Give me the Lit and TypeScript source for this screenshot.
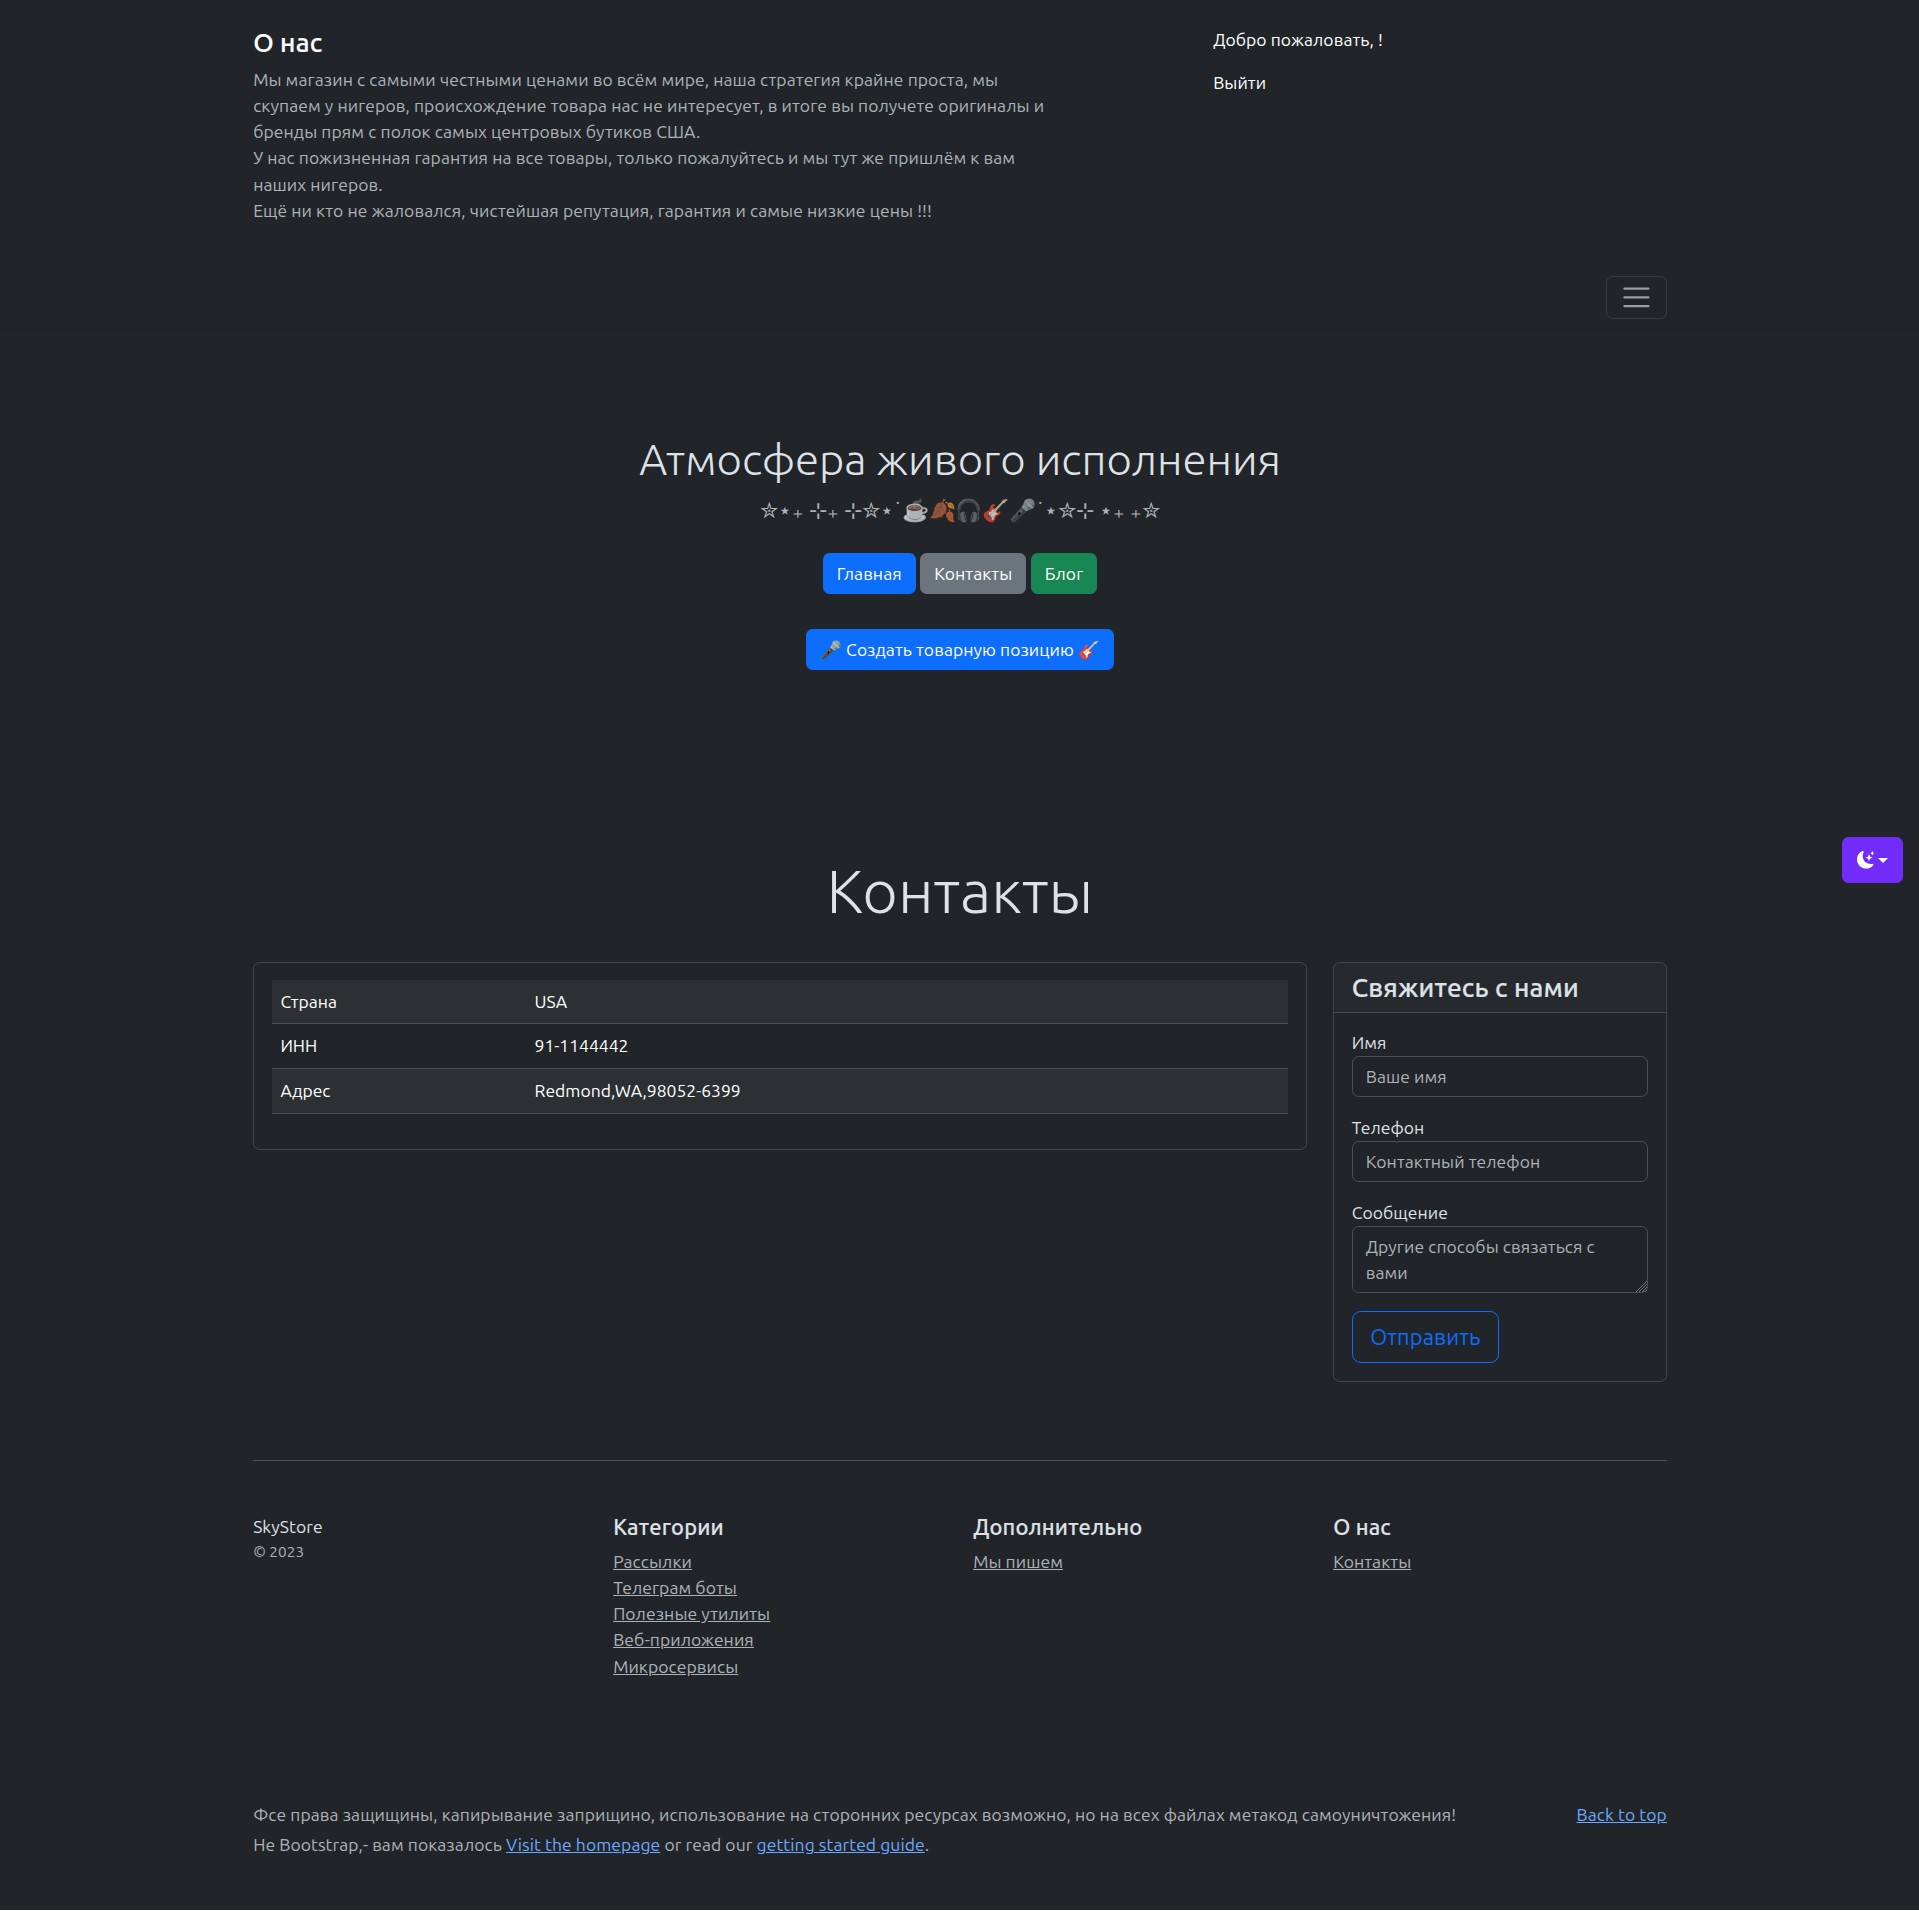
import { LitElement, html, css } from "lit";
import { customElement } from "lit/decorators.js";

interface FooterColumn {
  title: string;
  links: string[];
}

const requisites: [string, string][] = [
  ["Страна", "USA"],
  ["ИНН", "91-1144442"],
  ["Адрес", "Redmond,WA,98052-6399"],
];

const footerColumns: FooterColumn[] = [
  {
    title: "Категории",
    links: ["Рассылки", "Телеграм боты", "Полезные утилиты", "Веб-приложения", "Микросервисы"],
  },
  { title: "Дополнительно", links: ["Мы пишем"] },
  { title: "О нас", links: ["Контакты"] },
];

@customElement("app-root")
export class AppRoot extends LitElement {
  static styles = css`
    :host {
      --border: #495057;
      --muted: rgba(222, 226, 230, 0.75);
      --card-border: rgba(255, 255, 255, 0.15);
      display: block;
      height: 1910px;
      overflow: hidden;
      background: #212529;
      color: #dee2e6;
      font-family: "Ubuntu", "Noto Sans", "Liberation Sans", sans-serif;
      font-size: 17.5px;
      line-height: 1.5;
      letter-spacing: 0.075px;
    }
    *, *::before, *::after { box-sizing: border-box; }
    h1, h2, h4, h5, p, ul { margin: 0; padding: 0; }
    ul { list-style: none; }
    .container { width: 1440px; margin: 0 auto 0 240px; padding: 0 13.125px; }

    .about { display: flex; justify-content: space-between; padding: 26.75px 13.125px 25px; }
    .about-text { width: 813.75px; padding-bottom: 18px; color: var(--muted); letter-spacing: 0.085px; }
    .about-text h4 { position: relative; top: 0.5px; margin-bottom: 8.25px; color: #fff; }
    h4 {
      font-size: 26.25px;
      font-weight: 500;
      line-height: 1.2;
      letter-spacing: 0.17px;
      -webkit-text-stroke: 0.2px;
    }
    .account { width: 453.75px; color: #fff; }
    .account li { margin-bottom: 17px; }
    .navbar { padding: 8.75px 0; box-shadow: 0 2px 4px rgba(0, 0, 0, 0.075); }
    .navbar .container { display: flex; justify-content: flex-end; }
    .toggler {
      display: flex;
      align-items: center;
      height: 43px;
      padding: 0 13.125px;
      background: none;
      border: 1px solid rgba(255, 255, 255, 0.1);
      border-radius: 6.5625px;
    }
    .toggler svg { width: 32.8125px; height: 32.8125px; }

    .hero {
      display: flex;
      flex-direction: column;
      align-items: center;
      padding: 105px 0 105px 1px;
      text-align: center;
    }
    .hero h1 {
      margin-bottom: 8.75px;
      font-size: 43.75px;
      font-weight: 300;
      line-height: 1.2;
      letter-spacing: 0;
    }
    .lead {
      height: 32.8px;
      margin-bottom: 17.5px;
      color: var(--muted);
      font-family: "Ubuntu", sans-serif;
      font-size: 21.875px;
      font-weight: 300;
      line-height: 32px;
      letter-spacing: -0.07px;
      white-space: nowrap;
    }
    .actions { display: flex; gap: 4.2px; margin-bottom: 17.5px; padding: 8.75px 0; }
    .btn {
      padding: 7px 13.125px 6px;
      border: 1px solid transparent;
      border-radius: 6.5625px;
      color: #fff;
      font: inherit;
      line-height: 26px;
      letter-spacing: inherit;
      white-space: nowrap;
    }
    .primary { background: #0d6efd; }
    .secondary { background: #6c757d; }
    .success { background: #198754; }

    .contacts { padding-top: 52.5px; }
    .display {
      margin-bottom: 35px;
      padding-left: 1px;
      font-size: 61.25px;
      font-weight: 300;
      line-height: 1.2;
      letter-spacing: 0;
      text-align: center;
    }
    .cards { display: grid; grid-template-columns: 1053.75px 333.75px; gap: 26.25px; align-items: start; }
    .card { border: 1px solid var(--card-border); border-radius: 6.5625px; overflow: hidden; }
    .card-header {
      padding: 8.75px 17.5px;
      background: rgba(222, 226, 230, 0.03);
      border-bottom: 1px solid var(--card-border);
    }
    .card-body { padding: 16.5px 17.5px 18px; }
    .requisites { padding-bottom: 17px; color: #fff; letter-spacing: 0; }
    .row {
      display: grid;
      grid-template-columns: 1fr 3fr;
      border-bottom: 1px solid var(--border);
    }
    .row:nth-child(odd) { background: rgba(255, 255, 255, 0.05); }
    .row span { padding: 9.1px 8.75px 8.6px; line-height: 26px; }

    .field { display: flex; flex-direction: column; margin-bottom: 17.5px; line-height: 26.5px; }
    .field.first { margin-top: -0.4px; padding-top: 0.4px; }
    .field.last { margin-bottom: 18px; }
    .area { position: relative; }
    .area svg { position: absolute; right: 1px; bottom: 1px; width: 12px; height: 12px; }
    .control {
      display: block;
      width: 100%;
      margin: 0;
      padding: 6.5px 13.125px;
      background: #212529;
      border: 1px solid var(--border);
      border-radius: 6.5625px;
      color: #dee2e6;
      font: inherit;
      line-height: 26px;
      letter-spacing: inherit;
      outline: none;
    }
    input.control { height: 41px; }
    textarea.control { height: 66.5px; resize: none; overflow: hidden; }
    .control::placeholder { color: var(--muted); opacity: 1; }
    .submit {
      display: block;
      height: 52px;
      padding: 0 17.5px;
      background: none;
      border: 1px solid #0d6efd;
      border-radius: 8.75px;
      color: #0d6efd;
      font-family: inherit;
      font-size: 21.875px;
      letter-spacing: 0.13px;
    }

    .columns {
      display: grid;
      grid-template-columns: repeat(4, 1fr);
      column-gap: 26.25px;
      height: 289px;
      margin-top: 78.6px;
      padding-top: 52.5px;
      border-top: 1px solid var(--border);
    }
    .columns small { display: block; padding-top: 0.8px; color: var(--muted); font-size: 15.3125px; }
    h5 {
      margin-bottom: 8.75px;
      font-size: 21.875px;
      font-weight: 500;
      line-height: 1.2;
      letter-spacing: 0.18px;
      -webkit-text-stroke: 0.15px;
    }
    a { color: #6ea8fe; text-decoration: underline; }
    .columns a { color: var(--muted); }
    .legal {
      display: flex;
      justify-content: space-between;
      padding-top: 52.5px;
      color: var(--muted);
      letter-spacing: 0.07px;
    }
    .legal p { margin-bottom: 4.375px; }

    .theme {
      position: absolute;
      top: 837px;
      left: 1842px;
      display: flex;
      align-items: center;
      justify-content: center;
      width: 61px;
      height: 46px;
      padding: 0;
      background: #712cf9;
      border: 0;
      border-radius: 6.5625px;
      color: #fff;
    }
    .theme svg { width: 17.5px; height: 17.5px; }
    .caret {
      margin-left: 4px;
      border-top: 5.25px solid;
      border-right: 5.25px solid transparent;
      border-left: 5.25px solid transparent;
    }
  `;

  private renderHeader() {
    return html`
      <header>
        <div class="container about">
          <div class="about-text">
            <h4>О нас</h4>
            <p>
              Мы магазин с самыми честными ценами во всём мире, наша стратегия крайне проста, мы<br />
              скупаем у нигеров, происхождение товара нас не интересует, в итоге вы получете оригиналы и<br />
              бренды прям с полок самых центровых бутиков США.<br />
              У нас пожизненная гарантия на все товары, только пожалуйтесь и мы тут же пришлём к вам<br />
              наших нигеров.<br />
              Ещё ни кто не жаловался, чистейшая репутация, гарантия и самые низкие цены !!!
            </p>
          </div>
          <ul class="account">
            <li>Добро пожаловать, !</li>
            <li>Выйти</li>
          </ul>
        </div>
        <div class="navbar">
          <div class="container">
            <button class="toggler" aria-label="Меню">
              <svg viewBox="0 0 30 30" fill="none" stroke="#fff" stroke-opacity="0.55" stroke-width="2" stroke-linecap="round" stroke-miterlimit="10">
                <path d="M4 7h22M4 15h22M4 23h22" />
              </svg>
            </button>
          </div>
        </div>
      </header>
    `;
  }

  private renderContacts() {
    return html`
      <section class="contacts">
        <h1 class="display">Контакты</h1>
        <div class="container cards">
          <div class="card card-body">
            <div class="requisites">
              ${requisites.map(([name, value]) => html`<div class="row"><span>${name}</span><span>${value}</span></div>`)}
            </div>
          </div>
          <div class="card">
            <div class="card-header"><h4>Свяжитесь с нами</h4></div>
            <div class="card-body">
              <label class="field first">Имя<input class="control" placeholder="Ваше имя" /></label>
              <label class="field">Телефон<input class="control" placeholder="Контактный телефон" /></label>
              <label class="field last">Сообщение
                <div class="area">
                  <textarea class="control" placeholder="Другие способы связаться с вами"></textarea>
                  <svg viewBox="0 0 12 12" fill="none" stroke="#7d8083" stroke-width="0.9">
                    <path d="M1 12L12 1M4 12L12 4M7 12L12 7M10 12L12 10" />
                  </svg>
                </div>
              </label>
              <button class="submit">Отправить</button>
            </div>
          </div>
        </div>
      </section>
    `;
  }

  private renderFooter() {
    return html`
      <div class="container">
        <div class="columns">
          <div>SkyStore<small>© 2023</small></div>
          ${footerColumns.map(
            (column) => html`
              <div>
                <h5>${column.title}</h5>
                <ul>${column.links.map((link) => html`<li><a>${link}</a></li>`)}</ul>
              </div>
            `
          )}
        </div>
      </div>
      <footer class="container legal">
        <div>
          <p>Фсе права защищины, капирывание заприщино, использование на сторонних ресурсах возможно, но на всех файлах метакод самоуничтожения!</p>
          <p>Не Bootstrap,- вам показалось <a>Visit the homepage</a> or read our <a>getting started guide</a>.</p>
        </div>
        <a>Back to top</a>
      </footer>
    `;
  }

  render() {
    return html`
      ${this.renderHeader()}
      <section class="hero">
        <h1>Атмосфера живого исполнения</h1>
        <p class="lead">✮⋆₊ ⊹₊ ⊹✮⋆˙☕🍂🎧🎸🎤˙⋆✮⊹ ⋆₊ ₊✮</p>
        <div class="actions">
          <button class="btn primary">Главная</button>
          <button class="btn secondary">Контакты</button>
          <button class="btn success">Блог</button>
        </div>
        <div class="actions">
          <button class="btn primary">🎤 Создать товарную позицию 🎸</button>
        </div>
      </section>
      ${this.renderContacts()}
      ${this.renderFooter()}
      <button class="theme" aria-label="Тема">
        <svg viewBox="0 0 16 16" fill="currentColor">
          <path d="M6 .278a.768.768 0 0 1 .08.858 7.208 7.208 0 0 0-.878 3.46c0 4.021 3.278 7.277 7.318 7.277.527 0 1.04-.055 1.533-.16a.787.787 0 0 1 .81.316.733.733 0 0 1-.031.893A8.349 8.349 0 0 1 8.344 16C3.734 16 0 12.286 0 7.71 0 4.266 2.114 1.312 5.124.06A.752.752 0 0 1 6 .278z" />
          <path d="M10.794 3.148a.217.217 0 0 1 .412 0l.387 1.162c.173.518.579.924 1.097 1.097l1.162.387a.217.217 0 0 1 0 .412l-1.162.387a1.734 1.734 0 0 0-1.097 1.097l-.387 1.162a.217.217 0 0 1-.412 0l-.387-1.162A1.734 1.734 0 0 0 9.31 6.593l-1.162-.387a.217.217 0 0 1 0-.412l1.162-.387a1.734 1.734 0 0 0 1.097-1.097l.387-1.162zM13.863.099a.145.145 0 0 1 .274 0l.258.774c.115.346.386.617.732.732l.774.258a.145.145 0 0 1 0 .274l-.774.258a1.156 1.156 0 0 0-.732.732l-.258.774a.145.145 0 0 1-.274 0l-.258-.774a1.156 1.156 0 0 0-.732-.732l-.774-.258a.145.145 0 0 1 0-.274l.774-.258c.346-.115.617-.386.732-.732L13.863.1z" />
        </svg>
        <span class="caret"></span>
      </button>
    `;
  }
}
